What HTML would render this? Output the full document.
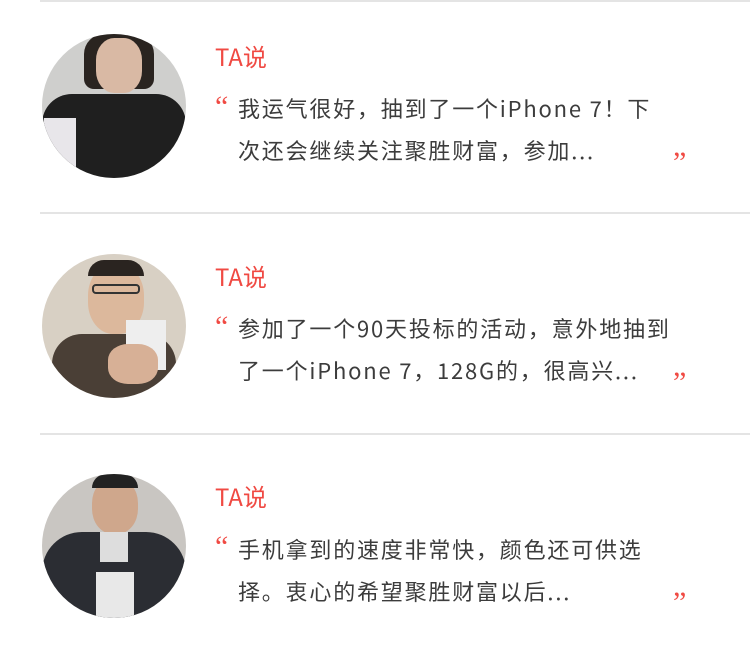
<!DOCTYPE html>
<html><head><meta charset="utf-8"><style>
body{margin:0;width:750px;height:659px;background:#fff;position:relative;overflow:hidden;font-family:"Noto Sans CJK SC","Liberation Sans",sans-serif}
.line{position:absolute;left:40px;right:0;height:2px;background:#e4e4e4}
.av{position:absolute;left:42px;width:144px;height:144px;border-radius:50%;overflow:hidden}
.ta{position:absolute;left:215px;font-size:24px;color:#f04a43;line-height:26px}
.q1{position:absolute;left:215px;font-size:30px;color:#f04a43;line-height:30px;font-family:"Liberation Serif",serif}
.q2{position:absolute;left:673px;font-size:30px;color:#f04a43;line-height:30px;font-family:"Liberation Serif",serif}
.tx{position:absolute;left:238px;font-size:22px;color:#3c3c3c;line-height:42px;width:460px;letter-spacing:1.8px;white-space:nowrap}
</style></head><body>
<div class="line" style="top:0"></div>
<div class="line" style="top:212px"></div>
<div class="line" style="top:433px"></div>

<div class="av" style="top:34px;background:#cfcfcd">
 <div style="position:absolute;left:42px;top:0;width:70px;height:55px;background:#2a2420;border-radius:20px 20px 10px 10px"></div>
 <div style="position:absolute;left:54px;top:4px;width:46px;height:55px;background:#d9b9a4;border-radius:40%"></div>
 <div style="position:absolute;left:0;top:60px;width:144px;height:90px;background:#1f1f1f;border-radius:30px 30px 0 0"></div>
 <div style="position:absolute;left:2px;top:84px;width:32px;height:50px;background:#e8e6ea"></div>
</div>
<div class="av" style="top:254px;background:#d8d0c4">
 <div style="position:absolute;left:46px;top:10px;width:56px;height:70px;background:#dcb89c;border-radius:45%"></div>
 <div style="position:absolute;left:46px;top:6px;width:56px;height:16px;background:#2a2420;border-radius:20px 20px 0 0"></div>
 <div style="position:absolute;left:50px;top:30px;width:48px;height:10px;border:2px solid #333;border-radius:4px;box-sizing:border-box"></div>
 <div style="position:absolute;left:10px;top:80px;width:124px;height:70px;background:#4a3f36;border-radius:30px 30px 0 0"></div>
 <div style="position:absolute;left:84px;top:66px;width:40px;height:50px;background:#eee"></div>
 <div style="position:absolute;left:66px;top:90px;width:50px;height:40px;background:#d7b096;border-radius:40%"></div>
</div>
<div class="av" style="top:474px;background:#c9c6c2">
 <div style="position:absolute;left:50px;top:4px;width:46px;height:56px;background:#cfa78c;border-radius:45%"></div>
 <div style="position:absolute;left:50px;top:0;width:46px;height:14px;background:#222;border-radius:20px 20px 0 0"></div>
 <div style="position:absolute;left:0;top:58px;width:144px;height:90px;background:#2b2d33;border-radius:40px 40px 0 0"></div>
 <div style="position:absolute;left:58px;top:58px;width:28px;height:30px;background:#ddd"></div>
 <div style="position:absolute;left:54px;top:98px;width:38px;height:46px;background:#e8e8e8"></div>
</div>

<div class="ta" style="top:43px">TA说</div>
<div class="q1" style="top:92px">“</div>
<div class="tx" style="top:87px">我运气很好，抽到了一个iPhone 7！下<br>次还会继续关注聚胜财富，参加...</div>
<div class="q2" style="top:148px">”</div>

<div class="ta" style="top:263px">TA说</div>
<div class="q1" style="top:312px">“</div>
<div class="tx" style="top:307px">参加了一个90天投标的活动，意外地抽到<br>了一个iPhone 7，128G的，很高兴...</div>
<div class="q2" style="top:368px">”</div>

<div class="ta" style="top:483px">TA说</div>
<div class="q1" style="top:532px">“</div>
<div class="tx" style="top:528px">手机拿到的速度非常快，颜色还可供选<br>择。衷心的希望聚胜财富以后...</div>
<div class="q2" style="top:588px">”</div>
</body></html>
